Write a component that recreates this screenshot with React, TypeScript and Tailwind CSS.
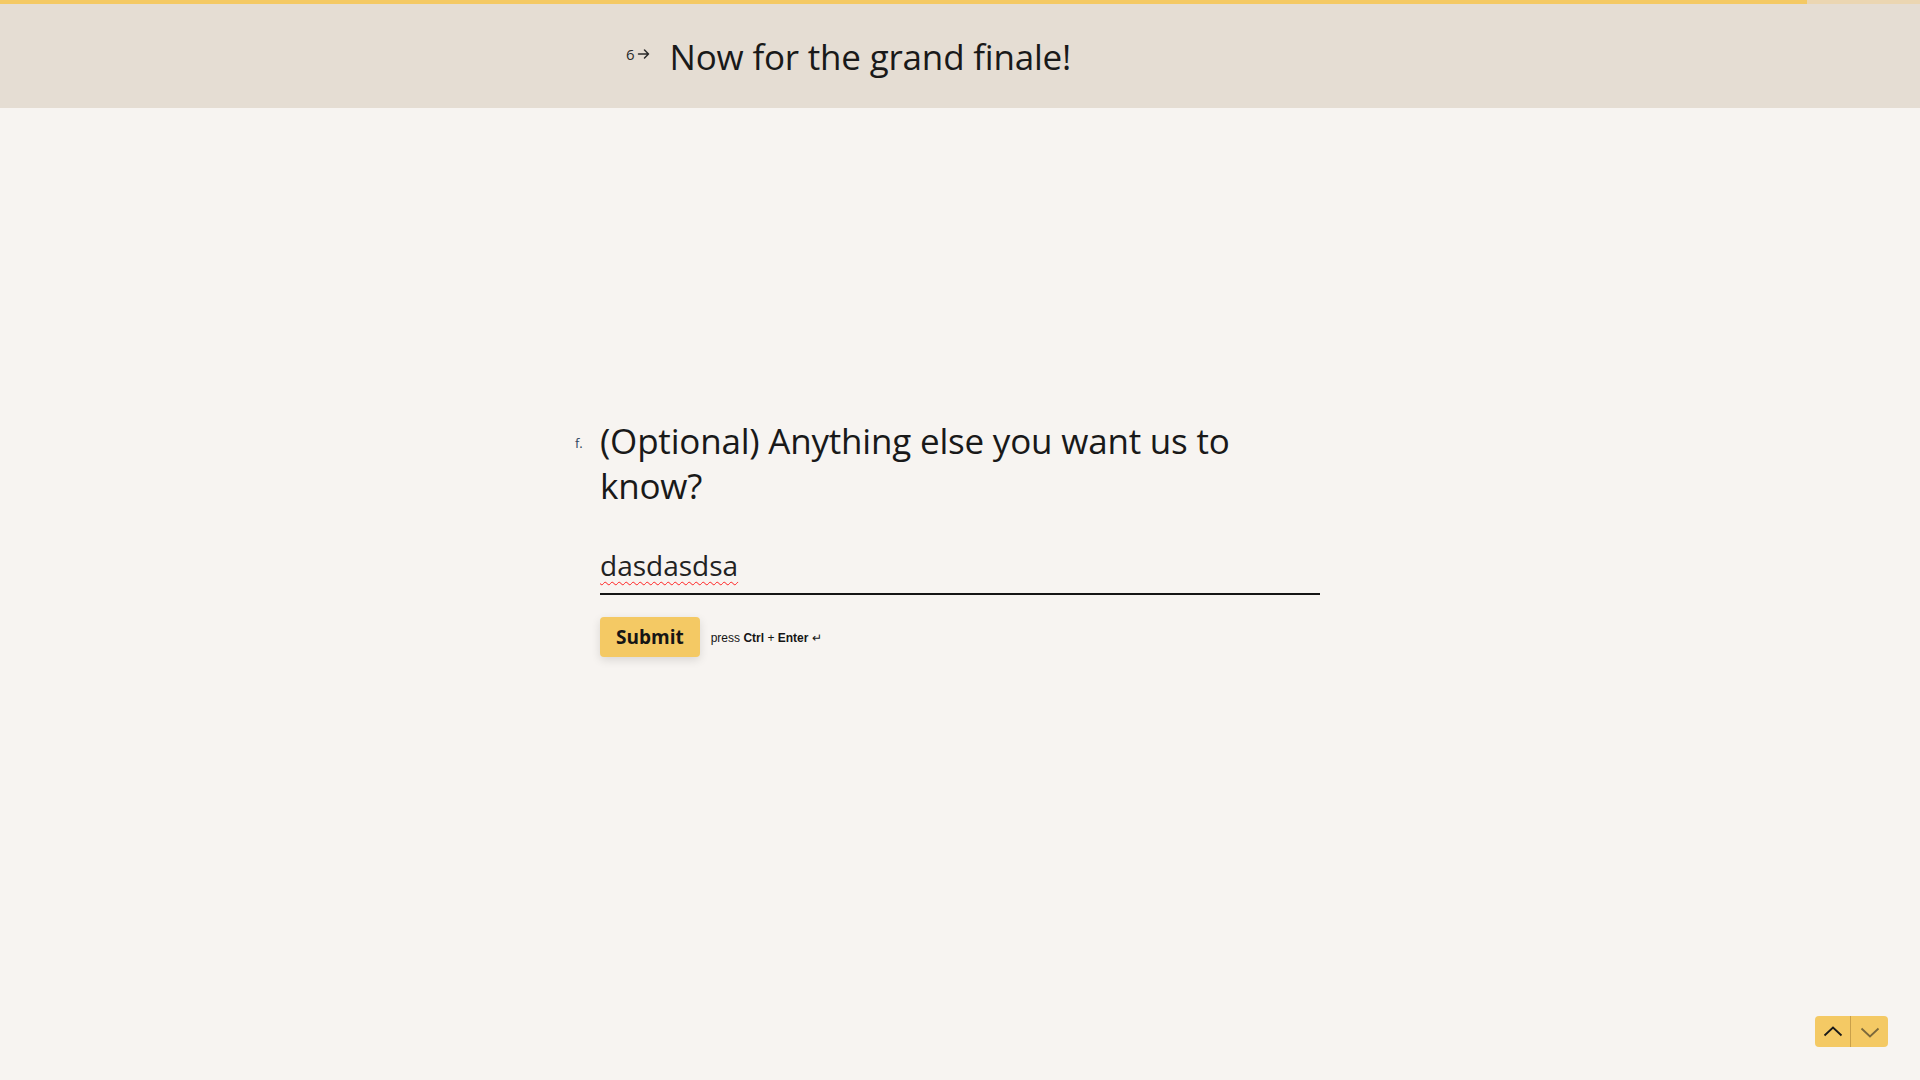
function ArrowRight() {
  return (
    <svg width="14" height="14" viewBox="0 0 14 14" fill="none" className="text-[#2a2a2a]">
      <path d="M1.5 7h10M7.5 3l4 4-4 4" stroke="currentColor" strokeWidth="1.5" strokeLinecap="round" strokeLinejoin="round" />
    </svg>
  );
}

function Chevron({ down }: { down?: boolean }) {
  return (
    <svg width="20" height="12" viewBox="0 0 20 12" fill="none">
      <path
        d={down ? 'M1.5 2.5l8.5 8 8.5-8' : 'M1.5 9.5l8.5-8 8.5 8'}
        stroke="currentColor"
        strokeWidth="1.8"
      />
    </svg>
  );
}

export default function App() {
  return (
    <div className="min-h-screen bg-[#f7f4f1] font-['Open_Sans',sans-serif] text-[#191919]">
      {/* progress bar */}
      <div className="flex h-[4px] w-full">
        <div className="w-[1807px] bg-[#f4c964]" />
        <div className="flex-1 bg-[#ebd6b2]" />
      </div>

      <header className="h-[104px] bg-[#e5ddd3]">
        <div className="mx-auto flex h-full w-[720px] items-center pl-[26px] pt-[1px]">
          <div className="mb-[5px] flex items-center gap-[2px] text-[15px] text-[#2a2a2a]">
            <span>6</span>
            <ArrowRight />
          </div>
          <h1 className="ml-[19px] text-[35px] leading-none tracking-[-0.2px]">Now for the grand finale!</h1>
        </div>
      </header>

      <main className="mx-auto w-[720px] pt-[310px]">
        <div className="relative">
          <span className="absolute left-[-25px] top-[16px] text-[13px] text-[#2c4560]">f.</span>
          <h2 className="text-[35px] leading-[45px] tracking-[-0.2px]">
            (Optional) Anything else you want us to know?
          </h2>
        </div>

        <div className="mt-[38px] border-b-2 border-[#151515] pb-[9px]">
          <div className="text-[28px] leading-[38px] text-[#222]">
            <span className="underline decoration-wavy decoration-[#ff2020] decoration-1 underline-offset-[5px]">dasdasdsa</span>
          </div>
        </div>

        <div className="mt-[22px] flex items-center">
          <button className="h-[40px] rounded-[4px] bg-[#f4c964] px-[16px] text-[19px] font-bold text-[#151515] shadow-[0_3px_10px_rgba(0,0,0,0.12)]">
            Submit
          </button>
          <span className="ml-[11px] mt-[2px] font-['Liberation_Sans',Arial,sans-serif] text-[12px] text-[#151515]">
            press <b>Ctrl</b> + <b>Enter</b> ↵
          </span>
        </div>
      </main>

      <div className="fixed bottom-[33px] right-[32px] flex h-[31px] overflow-hidden rounded-[4px] bg-[#f4c964]">
        <button className="flex w-[36px] items-center justify-center border-r border-[#c9a04a] text-[#1a1a1a]">
          <Chevron />
        </button>
        <button className="flex w-[37px] items-center justify-center text-[#1a1a1a]/55">
          <Chevron down />
        </button>
      </div>
    </div>
  );
}
